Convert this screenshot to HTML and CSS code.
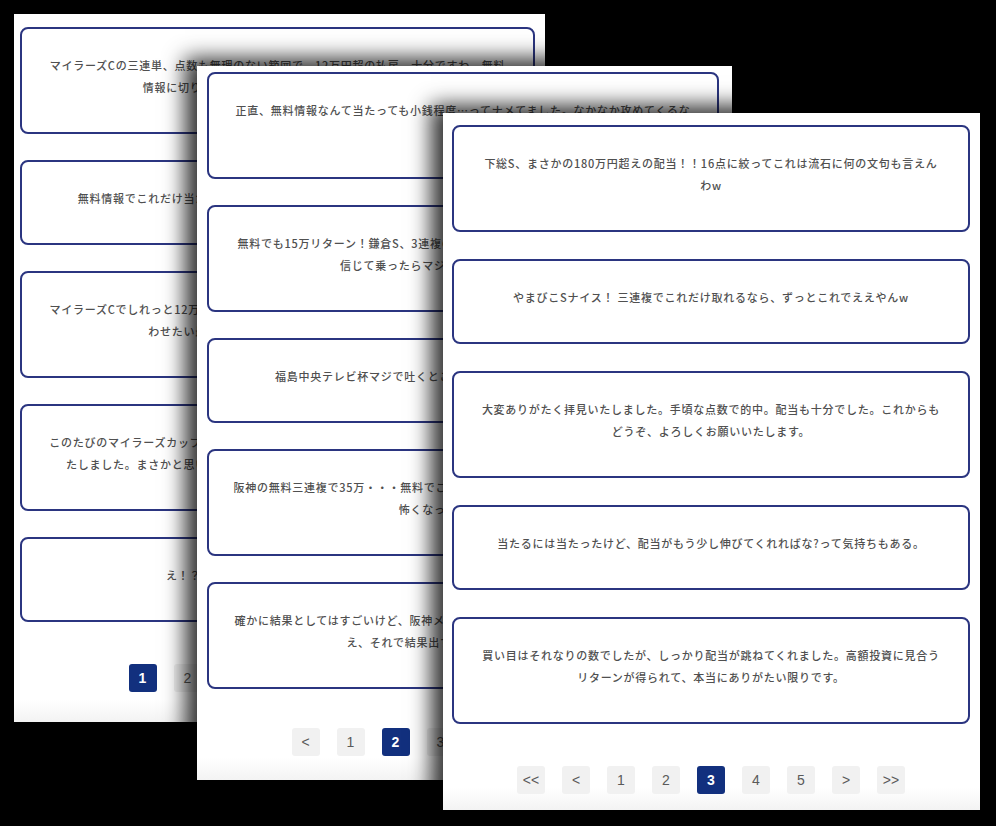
FILE: index.html
```
<!DOCTYPE html>
<html lang="ja">
<head>
<meta charset="utf-8">
<title>口コミ</title>
<link rel="stylesheet" href="styles.css">
</head>
<body>
<div class="stage">

  <section class="panel panel-1">
    <ul class="reviews">
      <li class="review"><p>マイラーズCの三連単、点数も無理のない範囲で、12万円超の払戻。十分ですわ。無料情報に切り替えてから、本当に調子がいいですね！</p></li>
      <li class="review"><p>無料情報でこれだけ当たるなら、有料情報はどれだけすごいのか気になる。</p></li>
      <li class="review"><p>マイラーズCでしれっと12万円超えの払い戻し！この嬉しさをぜひ周りの皆さんにも味わせたい最高の的中、ありがとうございました。</p></li>
      <li class="review"><p>このたびのマイラーズカップ、無料情報で見事に的中させていただいて、大変に感動いたしました。まさかと思いましたが、こんな高配当になるとは夢にも思わず…。</p></li>
      <li class="review"><p>え！？マジで当たった！無料でこれは神か</p></li>
    </ul>
    <nav class="pager">
      <span class="pg is-active">1</span>
      <span class="pg">2</span>
      <span class="pg">3</span>
      <span class="pg">4</span>
      <span class="pg">5</span>
      <span class="pg">&gt;</span>
      <span class="pg">&gt;&gt;</span>
    </nav>
  </section>

  <section class="panel panel-2">
    <ul class="reviews">
      <li class="review"><p>正直、無料情報なんて当たっても小銭程度…ってナメてました。なかなか攻めてくるなあ。</p></li>
      <li class="review"><p>無料でも15万リターン！鎌倉S、3連複の無料情報でこの結果は本当に最高ですね！！信じて乗ったらマジで当たってびっくりです！</p></li>
      <li class="review"><p>福島中央テレビ杯マジで吐くところだった…無料情報に感謝しかない。</p></li>
      <li class="review"><p>阪神の無料三連複で35万・・・無料でこんなに当たっていいのか、正直言ってちょっと怖くなってきましたね。</p></li>
      <li class="review"><p>確かに結果としてはすごいけど、阪神メインの買い目は正直ドキドキしたよね。でもねえ、それで結果出すんだから文句なしです。</p></li>
    </ul>
    <nav class="pager">
      <span class="pg">&lt;</span>
      <span class="pg">1</span>
      <span class="pg is-active">2</span>
      <span class="pg">3</span>
      <span class="pg">4</span>
      <span class="pg">5</span>
      <span class="pg">&gt;</span>
      <span class="pg">&gt;&gt;</span>
    </nav>
  </section>

  <section class="panel panel-3">
    <ul class="reviews">
      <li class="review"><p>下総S、まさかの180万円超えの配当！！16点に絞ってこれは流石に何の文句も言えんわw</p></li>
      <li class="review"><p>やまびこSナイス！ 三連複でこれだけ取れるなら、ずっとこれでええやんw</p></li>
      <li class="review"><p>大変ありがたく拝見いたしました。手頃な点数で的中。配当も十分でした。これからもどうぞ、よろしくお願いいたします。</p></li>
      <li class="review"><p>当たるには当たったけど、配当がもう少し伸びてくれればな?って気持ちもある。</p></li>
      <li class="review"><p>買い目はそれなりの数でしたが、しっかり配当が跳ねてくれました。高額投資に見合うリターンが得られて、本当にありがたい限りです。</p></li>
    </ul>
    <nav class="pager">
      <span class="pg">&lt;&lt;</span>
      <span class="pg">&lt;</span>
      <span class="pg">1</span>
      <span class="pg">2</span>
      <span class="pg is-active">3</span>
      <span class="pg">4</span>
      <span class="pg">5</span>
      <span class="pg">&gt;</span>
      <span class="pg">&gt;&gt;</span>
    </nav>
  </section>

</div>
</body>
</html>
```
FILE: styles.css
```
html, body {
  margin: 0;
  padding: 0;
  background: #000;
}

.stage {
  position: relative;
  width: 996px;
  height: 826px;
  overflow: hidden;
  background: #000;
}

.panel {
  position: absolute;
  box-sizing: border-box;
  background: linear-gradient(to bottom, #fff calc(100% - 22px), #f3f3f3);
  box-shadow: -6px -2px 20px 6px rgba(0, 0, 0, 0.8);
  --gap: 27px;
  --pad-x: 27px;
  --pager-top: 42px;
}

.panel-1 {
  left: 14px;
  top: 14px;
  width: 531px;
  height: 708px;
  padding: 13px 10px 0 6px;
  --gap: 26px;
}

.panel-2 {
  left: 197px;
  top: 66px;
  width: 535px;
  height: 714px;
  padding: 6px 13px 0 10px;
  --gap: 26px;
  --pad-x: 24px;
  --pager-top: 39px;
}

.panel-3 {
  left: 443px;
  top: 113px;
  width: 537px;
  height: 697px;
  padding: 12px 10px 0 9px;
}

.reviews {
  list-style: none;
  margin: 0;
  padding: 0;
  display: flex;
  flex-direction: column;
  gap: var(--gap);
}

.review {
  border: 2px solid #2b3580;
  border-radius: 8px;
  padding: 25px var(--pad-x) 34px;
  text-align: center;
  background: #fff;
}

.review p {
  margin: 0;
  font-family: "Noto Sans CJK JP", "Noto Sans", sans-serif;
  font-size: 11px;
  font-weight: 500;
  line-height: 22px;
  letter-spacing: 0.75px;
  color: #505050;
}

.pager {
  display: flex;
  justify-content: center;
  gap: 17px;
  margin-top: var(--pager-top);
}

.pg {
  width: 28px;
  height: 28px;
  display: flex;
  align-items: center;
  justify-content: center;
  background: #f1f1f1;
  color: #5a5a5a;
  border-radius: 3px;
  font-family: "Liberation Sans", Arial, sans-serif;
  font-size: 14px;
}

.pg.is-active {
  background: #12307e;
  color: #fff;
  font-weight: bold;
}
```
